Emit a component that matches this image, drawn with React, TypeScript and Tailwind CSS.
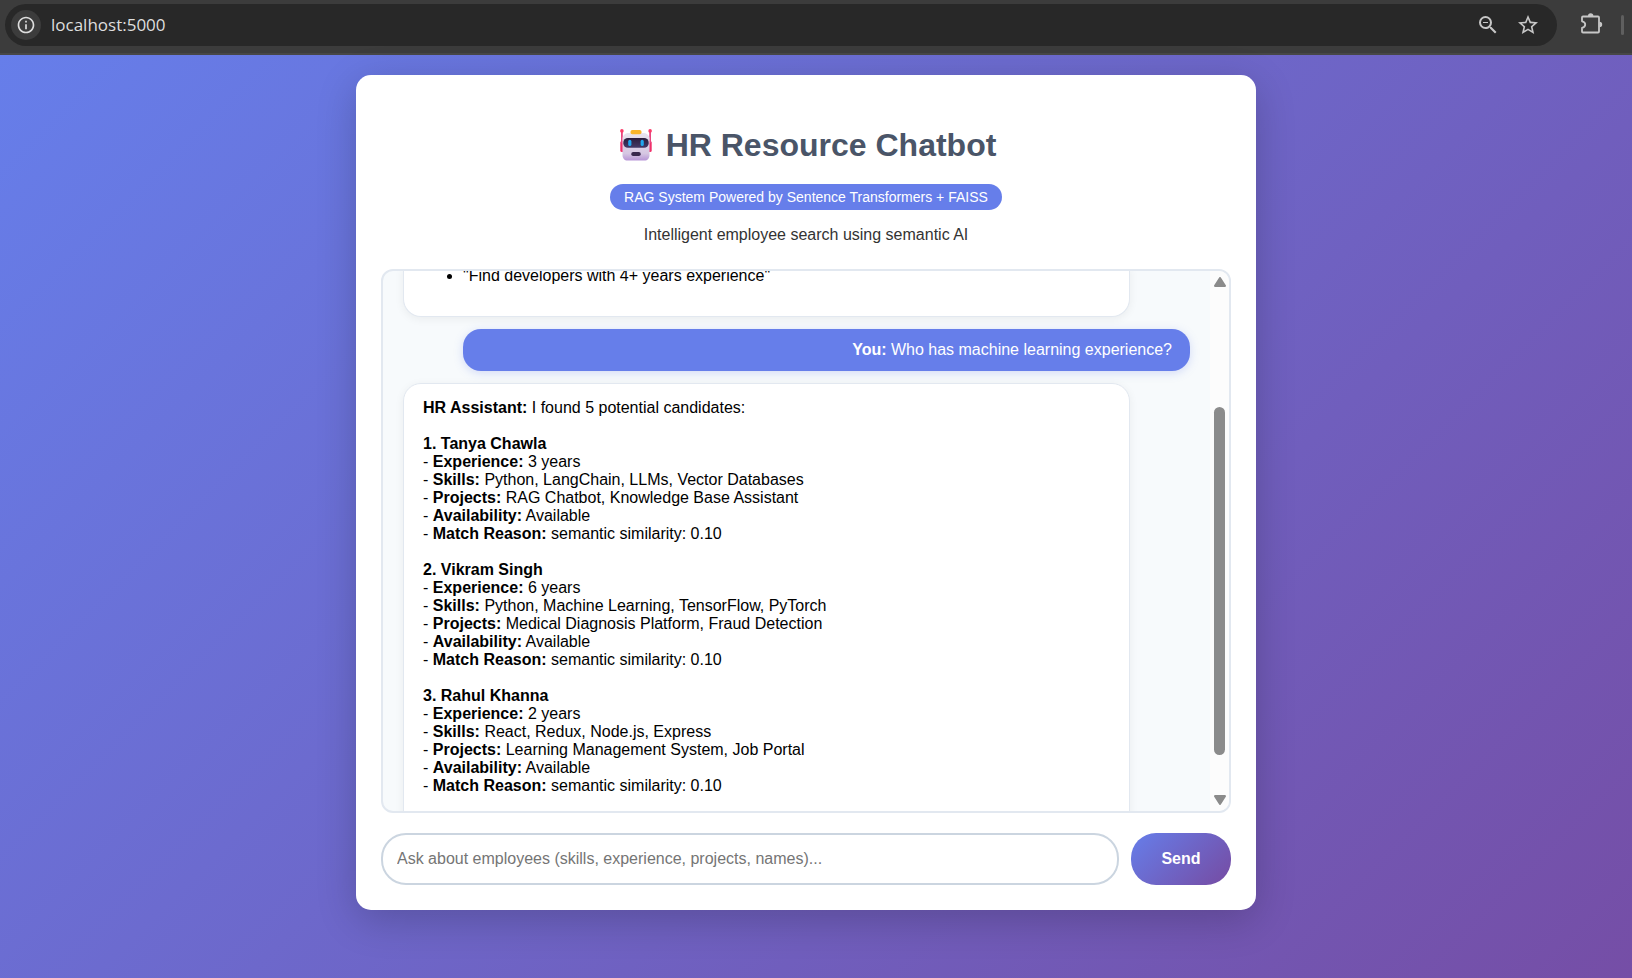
import React from "react";
import { MdOutlineInfo, MdStarBorder, MdZoomOut } from "react-icons/md";

type Candidate = {
  name: string;
  experience: string;
  skills: string;
  projects: string;
  availability: string;
  reason: string;
};

const candidates: Candidate[] = [
  {
    name: "Tanya Chawla",
    experience: "3 years",
    skills: "Python, LangChain, LLMs, Vector Databases",
    projects: "RAG Chatbot, Knowledge Base Assistant",
    availability: "Available",
    reason: "semantic similarity: 0.10",
  },
  {
    name: "Vikram Singh",
    experience: "6 years",
    skills: "Python, Machine Learning, TensorFlow, PyTorch",
    projects: "Medical Diagnosis Platform, Fraud Detection",
    availability: "Available",
    reason: "semantic similarity: 0.10",
  },
  {
    name: "Rahul Khanna",
    experience: "2 years",
    skills: "React, Redux, Node.js, Express",
    projects: "Learning Management System, Job Portal",
    availability: "Available",
    reason: "semantic similarity: 0.10",
  },
];

function PuzzleIcon() {
  return (
    <svg viewBox="0 0 24 24" className="size-6" fill="none" stroke="#c7c7c7" strokeWidth="1.800" strokeLinejoin="round" aria-hidden="true">
      <path d="M4 4.500h15a1 1 0 0 1 1 1v14a1 1 0 0 1-1 1H4a1 1 0 0 1-1-1v-3.700c2-.3 3.200-1.600 3.200-3.300S5 9.700 3 9.300V5.500a1 1 0 0 1 1-1z" />
      <path d="M9 4a2.700 2.700 0 0 1 5.400 0zM20.500 9.800a2.700 2.700 0 0 1 0 5.400z" fill="#c7c7c7" stroke="none" />
    </svg>
  );
}

function RobotIcon() {
  return (
    <svg viewBox="0 0 32 32" className="size-8" aria-hidden="true">
      <defs>
        <linearGradient id="face" x1="0" y1="0" x2="0" y2="1">
          <stop offset="0" stopColor="#e9e4ee" />
          <stop offset="0.75" stopColor="#d5c6e2" />
          <stop offset="1" stopColor="#b795d6" />
        </linearGradient>
        <linearGradient id="visor" x1="0" y1="0" x2="0" y2="1">
          <stop offset="0" stopColor="#2a1c3c" />
          <stop offset="1" stopColor="#443a68" />
        </linearGradient>
      </defs>
      <rect x="0.300" y="12" width="4" height="11" rx="1.500" fill="#f0306a" />
      <rect x="27.700" y="12" width="4" height="11" rx="1.500" fill="#f0306a" />
      <rect x="1" y="2" width="1.800" height="12" fill="#e8457f" />
      <rect x="29.200" y="2" width="1.800" height="12" fill="#e8457f" />
      <circle cx="1.900" cy="1.900" r="1.800" fill="#fb3b68" />
      <circle cx="30.100" cy="1.900" r="1.800" fill="#fb3b68" />
      <path d="M8.500 4h15c3.500 0 6 2.500 6 6V26c0 3.500-2 5.500-5 5.500h-17c-3 0-5-2-5-5.500V10c0-3.500 2.500-6 6-6z" fill="url(#face)" />
      <rect x="10.500" y="1" width="11" height="4.200" rx="1.800" fill="#f9b52b" />
      <rect x="3.300" y="9" width="25.400" height="9.800" rx="4.600" fill="url(#visor)" />
      <rect x="8.200" y="10.800" width="3.200" height="6.200" rx="1.600" fill="#21a7ee" />
      <rect x="20.600" y="10.800" width="3.200" height="6.200" rx="1.600" fill="#21a7ee" />
      <rect x="11.300" y="23" width="9.400" height="4" rx="1.800" fill="#38284d" />
    </svg>
  );
}

function BrowserBar() {
  return (
    <header className="flex h-[55px] items-start border-b-2 border-[#474747] bg-[#3c3c3c] pt-1 pr-2 pl-[5px]">
      <div className="flex h-[42px] flex-1 items-center rounded-full bg-[#282828] pr-[17px] pl-1.5">
        <button type="button" aria-label="Site information" className="flex size-[30px] items-center justify-center rounded-full bg-[#3c3c3c] text-[#dedede]">
          <MdOutlineInfo className="size-5" />
        </button>
        <input
          type="text"
          aria-label="Address"
          defaultValue="localhost:5000"
          className="ml-2.5 h-7 min-w-0 flex-1 bg-transparent font-['Open_Sans','Noto_Sans',sans-serif] text-[17px] leading-7 text-[#dedede] outline-none"
        />
        <button type="button" aria-label="Zoom" className="text-[#c7c7c7]">
          <MdZoomOut className="size-6" />
        </button>
        <button type="button" aria-label="Bookmark this page" className="ml-4 text-[#c7c7c7]">
          <MdStarBorder className="size-6" />
        </button>
      </div>
      <button type="button" aria-label="Extensions" className="mt-2 ml-[22px]">
        <PuzzleIcon />
      </button>
      <div className="mt-[11px] ml-[18px] h-5 w-[3px] rounded-full bg-[#5f5f5f]" />
    </header>
  );
}

const assistantBubble = "mr-[60px] shrink-0 border border-[#e2e8f0] bg-white px-[19px] py-[15px] shadow-[0_2px_10px_rgba(0,0,0,0.06)]";

function Detail({ label, value }: { label: string; value: string }) {
  return (
    <p>
      - <strong>{label}:</strong> {value}
    </p>
  );
}

function ScrollBar() {
  return (
    <div className="flex w-[19px] shrink-0 flex-col items-center bg-[#fcfcfc] py-1.5" aria-hidden="true">
      <svg viewBox="0 0 12 10" className="h-2.5 w-3" fill="#8b8b8b">
        <path d="M5 .7a1.200 1.200 0 0 1 2 0L11.800 8.300a1 1 0 0 1-.8 1.600H1a1 1 0 0 1-.8-1.600z" />
      </svg>
      <div className="h-[120px]" />
      <div className="h-[348px] w-[11px] rounded-full bg-[#8b8b8b]" />
      <div className="flex-1" />
      <svg viewBox="0 0 12 10" className="h-2.5 w-3" fill="#8b8b8b">
        <path d="M5 9.300a1.200 1.200 0 0 0 2 0L11.800 1.700A1 1 0 0 0 11 .1H1a1 1 0 0 0-.8 1.600z" />
      </svg>
    </div>
  );
}

function Conversation() {
  return (
    <section aria-label="Conversation" className="flex h-[544px] overflow-hidden rounded-xl border-2 border-[#e2e8f0] bg-[#f7fafc]">
      <div className="-mt-1 flex min-w-0 flex-1 flex-col gap-3 px-5 leading-[18px] text-black">
        <article className={`${assistantBubble} rounded-b-[18px] border-t-0 pt-0`}>
          <ul className="mb-4 list-disc pl-10">
            <li>"Find developers with 4+ years experience"</li>
          </ul>
        </article>
        <article className="ml-[60px] shrink-0 rounded-[18px] bg-[#667eea] px-[18px] py-3 text-right text-white shadow-[0_2px_10px_rgba(102,126,234,0.25)]">
          <strong>You:</strong> Who has machine learning experience?
        </article>
        <article className={`${assistantBubble} rounded-t-[18px]`}>
          <p>
            <strong>HR Assistant:</strong> I found 5 potential candidates:
          </p>
          {candidates.map((c, i) => (
            <div key={c.name} className="mt-[18px]">
              <p className="font-bold">
                {i + 1}. {c.name}
              </p>
              <Detail label="Experience" value={c.experience} />
              <Detail label="Skills" value={c.skills} />
              <Detail label="Projects" value={c.projects} />
              <Detail label="Availability" value={c.availability} />
              <Detail label="Match Reason" value={c.reason} />
            </div>
          ))}
          <div className="h-9" />
        </article>
      </div>
      <ScrollBar />
    </section>
  );
}

export default function App() {
  return (
    <div className="flex min-h-screen flex-col font-['Liberation_Sans',Arial,sans-serif] text-base">
      <BrowserBar />
      <div className="flex-1 bg-[linear-gradient(135deg,#667eea_0%,#764ba2_106%)] py-5 pr-5">
        <main className="mx-auto max-w-[900px] rounded-[15px] bg-white p-[25px] shadow-[0_10px_40px_rgba(0,0,0,0.2)]">
          <div className="flex flex-col items-center pt-[25px]">
            <h1 className="flex items-center gap-3.5 pl-1 text-[32px] leading-10 font-bold text-[#4a5568]">
              <RobotIcon />
              HR Resource Chatbot
            </h1>
            <p className="mt-[19px] rounded-full bg-[#667eea] px-3.5 text-[14px] leading-[26px] text-white">
              RAG System Powered by Sentence Transformers + FAISS
            </p>
            <p className="mt-4 mb-[25px] leading-[18px] text-[#333333]">Intelligent employee search using semantic AI</p>
          </div>
          <Conversation />
          <form className="mt-5 flex gap-3" onSubmit={(e) => e.preventDefault()}>
            <input
              type="text"
              aria-label="Question"
              placeholder="Ask about employees (skills, experience, projects, names)..."
              className="h-[52px] min-w-0 flex-1 rounded-[25px] border-2 border-[#cbd5e0] bg-white px-3.5 text-black outline-none placeholder:text-[#757575]"
            />
            <button
              type="submit"
              className="h-[52px] w-[100px] rounded-[25px] bg-[linear-gradient(135deg,#667eea_0%,#764ba2_100%)] font-bold text-white"
            >
              Send
            </button>
          </form>
        </main>
      </div>
    </div>
  );
}
